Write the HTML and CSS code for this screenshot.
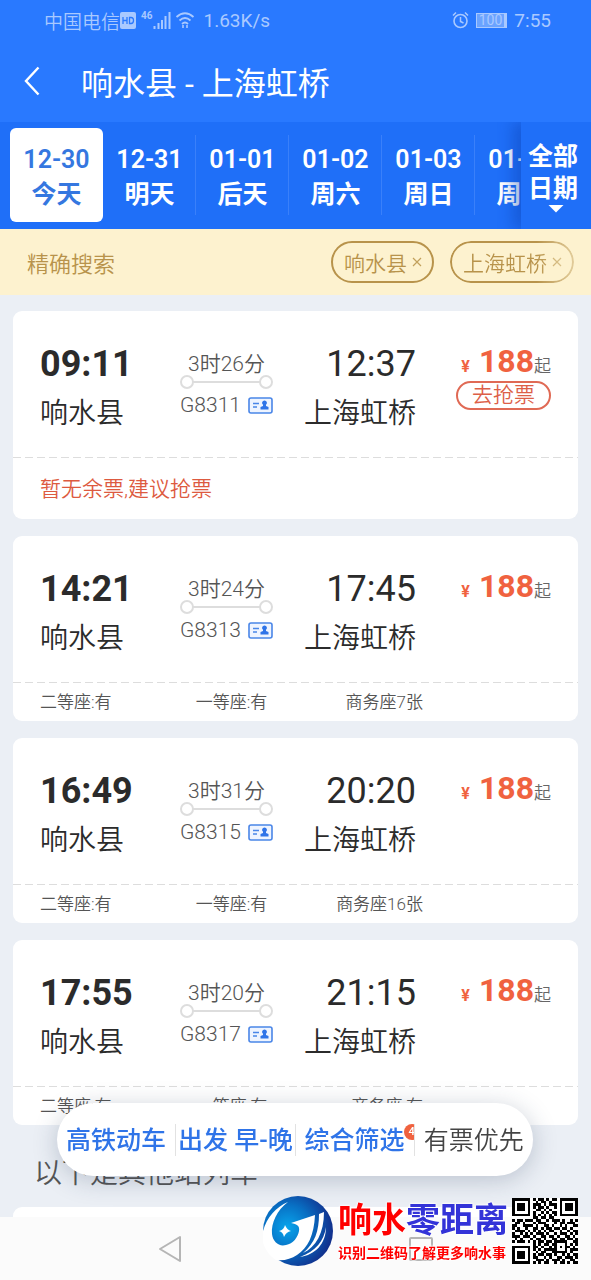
FILE: index.html
```html
<!DOCTYPE html>
<html lang="zh-CN">
<head>
    <meta charset="UTF-8">
    <meta name="viewport" content="width=device-width, initial-scale=1.0">
    <title>响水县 - 上海虹桥</title>
    <link rel="stylesheet" href="styles.css">
</head>
<body>

<svg width="0" height="0" class="defs">
    <symbol id="idCard" viewBox="0 0 25 17">
        <rect x="1" y="1" width="23" height="15" rx="2" fill="#eef4ff" stroke="#4a86e8" stroke-width="1.6"/>
        <path d="M5 6.500h6M5 10h4" stroke="#4a86e8" stroke-width="1.4"/>
        <path d="M16.500 3.500a2.400 2.400 0 0 1 1.500 4.300v1.200l2.500 1v2.500h-8v-2.500l2.500-1v-1.200a2.400 2.400 0 0 1 1.500-4.300z" fill="#2f74e8"/>
    </symbol>
</svg>

<div id="container">
    <header class="header">
        <div class="status">
            <span>中国电信</span>
            <svg class="hd" width="16" height="17" viewBox="0 0 16 17"><rect x="0" y="0" width="16" height="17" rx="2" fill="#a9c9ff"/><path d="M3 5v7M7 5v7M3 8.500h4M9.500 5.500v6h1.500q2.500 0 2.500-3t-2.500-3z" fill="none" stroke="#2979ff" stroke-width="1.300"/></svg>
            <span class="net">46</span>
            <svg class="signal" width="18" height="18" viewBox="0 0 18 18"><path d="M1.500 18v-3M5.500 18v-6M9 18v-9M12.500 18V5M16.500 18V1" stroke="#a9c9ff" stroke-width="2"/></svg>
            <svg class="wifi" width="20" height="18" viewBox="0 0 20 18"><path d="M1.500 6q8.500-7.500 17 0M4.500 9.500q5.500-5 11 0M7 13q3-3 6 0" fill="none" stroke="#a9c9ff" stroke-width="1.800"/><path d="M8 17v-3M12 14v3" stroke="#a9c9ff" stroke-width="1.600"/></svg>
            <span class="speed">1.63K/s</span>
            <span class="right">
                <svg width="17" height="18" viewBox="0 0 17 18"><circle cx="8.500" cy="10" r="6.500" fill="none" stroke="#a9c9ff" stroke-width="1.600"/><path d="M8.500 6v4.500l3 1.500M1 4.500l3-3M16 4.500l-3-3" fill="none" stroke="#a9c9ff" stroke-width="1.500"/></svg>
                <span class="battery">100</span>
                <span>7:55</span>
            </span>
        </div>
        <div class="title-bar">
            <button class="back" aria-label="返回"><svg width="16" height="30" viewBox="0 0 16 30"><path d="M14.500 1.500L2 15l12.500 13.500" fill="none" stroke="#fff" stroke-width="2.400"/></svg></button>
            <h1>响水县 - 上海虹桥</h1>
        </div>
    </header>

    <nav class="dates">
        <div class="date-list">
            <button class="date active">12-30<br>今天</button>
            <button class="date">12-31<br>明天</button>
            <button class="date">01-01<br>后天</button>
            <button class="date">01-02<br>周六</button>
            <button class="date">01-03<br>周日</button>
            <button class="date">01-04<br>周一</button>
        </div>
        <button class="all-dates">全部<br>日期<span class="caret"></span></button>
    </nav>

    <div class="search">
        <span>精确搜索</span>
        <div class="tags">
            <button class="tag">响水县<svg width="10" height="10" viewBox="0 0 10 10"><path d="M1 1l8 8M9 1L1 9" stroke="#c2a15c" stroke-width="1.200"/></svg></button>
            <button class="tag fade">上海虹桥<svg width="10" height="10" viewBox="0 0 10 10"><path d="M1 1l8 8M9 1L1 9" stroke="#c2a15c" stroke-width="1.200"/></svg></button>
        </div>
    </div>

    <main class="list">
        <article class="card">
            <div class="train">
                <div class="stop"><b class="time">09:11</b><span class="city">响水县</span></div>
                <div class="trip"><span>3时26分</span><i class="track"></i><span class="number">G8311<svg width="25" height="17"><use href="#idCard"/></svg></span></div>
                <div class="stop arrive"><span class="time">12:37</span><span class="city">上海虹桥</span></div>
                <div class="cost"><div class="price"><small>¥</small><b>188</b><span>起</span></div><button class="grab">去抢票</button></div>
            </div>
            <p class="notice">暂无余票,建议抢票</p>
        </article>

        <article class="card">
            <div class="train">
                <div class="stop"><b class="time">14:21</b><span class="city">响水县</span></div>
                <div class="trip"><span>3时24分</span><i class="track"></i><span class="number">G8313<svg width="25" height="17"><use href="#idCard"/></svg></span></div>
                <div class="stop arrive"><span class="time">17:45</span><span class="city">上海虹桥</span></div>
                <div class="cost"><div class="price"><small>¥</small><b>188</b><span>起</span></div></div>
            </div>
            <div class="seats"><span>二等座:有</span><span>一等座:有</span><span>商务座7张</span></div>
        </article>

        <article class="card">
            <div class="train">
                <div class="stop"><b class="time">16:49</b><span class="city">响水县</span></div>
                <div class="trip"><span>3时31分</span><i class="track"></i><span class="number">G8315<svg width="25" height="17"><use href="#idCard"/></svg></span></div>
                <div class="stop arrive"><span class="time">20:20</span><span class="city">上海虹桥</span></div>
                <div class="cost"><div class="price"><small>¥</small><b>188</b><span>起</span></div></div>
            </div>
            <div class="seats"><span>二等座:有</span><span>一等座:有</span><span>商务座16张</span></div>
        </article>

        <article class="card">
            <div class="train">
                <div class="stop"><b class="time">17:55</b><span class="city">响水县</span></div>
                <div class="trip"><span>3时20分</span><i class="track"></i><span class="number">G8317<svg width="25" height="17"><use href="#idCard"/></svg></span></div>
                <div class="stop arrive"><span class="time">21:15</span><span class="city">上海虹桥</span></div>
                <div class="cost"><div class="price"><small>¥</small><b>188</b><span>起</span></div></div>
            </div>
            <div class="seats"><span>二等座:有</span><span>一等座:有</span><span>商务座:有</span></div>
        </article>

        <h2 class="others">以下是其他站列车</h2>
        <article class="card next"></article>
    </main>

    <footer class="system">
        <svg class="sys-back" width="24" height="28" viewBox="0 0 24 28"><path d="M22 2v24L2 14z" fill="none" stroke="#b5b5b5" stroke-width="2" stroke-linejoin="round"/></svg>
        <svg class="sys-recent" width="24" height="24" viewBox="0 0 24 24"><rect x="1" y="1" width="22" height="22" rx="1" fill="none" stroke="#b5b5b5" stroke-width="2"/></svg>
    </footer>
</div>

<div class="filters">
    <button>高铁动车</button>
    <button>出发 早-晚</button>
    <button>综合筛选<span class="badge">4</span></button>
    <button class="plain">有票优先</button>
</div>

<div class="promo">
    <svg class="logo" width="72" height="72" viewBox="0 0 72 72">
        <defs>
            <radialGradient id="ball" cx="35%" cy="45%" r="65%">
                <stop offset="0" stop-color="#08a5ec"/>
                <stop offset=".5" stop-color="#0870c4"/>
                <stop offset="1" stop-color="#112f8c"/>
            </radialGradient>
        </defs>
        <circle cx="36" cy="36" r="35" fill="url(#ball)"/>
        <path d="M26 7C14 12 5 22 1 36v12c3 8 7 13 13 17 8 1 15-1 21-5 11-7 17-20 18-40l-24 8c6 1 9 3 8 8-1 6-6 13-13 14-7 2-13-3-14-11-1-11 5-24 16-32z" fill="#fff"/>
        <path d="M62 17l-5 2c0 17-4 29-16 39 13-6 21-20 21-41z" fill="#fff"/>
        <path d="M64 32c-2 14-10 24-26 30 15-2 26-13 26-30z" fill="#fff"/>
        <path d="M23 30q2 5 6 6-5 1-7 6-1-5-5-6 5-1 6-6z" fill="#fff"/>
    </svg>
    <div class="promo-text">
        <div class="promo-name">响水<span>零距离</span></div>
        <div class="promo-note">识别二维码了解更多响水事</div>
    </div>
    <svg id="qr" class="qr" width="66" height="66" viewBox="0 0 25 25" shape-rendering="crispEdges"></svg>
</div>

<script>
    const rows = [
        '1111111010110101101111111',
        '1000001001011010001000001',
        '1011101011101011101011101',
        '1011101010110100101011101',
        '1011101001101010001011101',
        '1000001010010101101000001',
        '1111111010101010101111111',
        '0000000011011011000000000',
        '1011011101100101110100101',
        '0110100010111000101101110',
        '1100111101001101001010011',
        '1010010011010110110110100',
        '0111101010101011001001011',
        '1001010101110100101110101',
        '1110111010011011010011010',
        '0101000101101001101101101',
        '1011101010110110111110011',
        '0000000010101101100010101',
        '1111111011010010101011010',
        '1000001010101111100010111',
        '1011101001011001111110100',
        '1011101010110110100101011',
        '1011101011001010011011101',
        '1000001001110101110100110',
        '1111111010101100101101011'
    ];

    let path = '';
    rows.forEach((row, y) => {
        for (let x = 0; x < row.length; x++) {
            if (row[x] === '1') path += `M${x} ${y}h1v1h-1z`;
        }
    });
    document.getElementById('qr').innerHTML = `<path d="${path}"/>`;
</script>

</body>
</html>
```
FILE: styles.css
```css
* {
    box-sizing: border-box;
}
body {
    margin: 0;
    font-family: Roboto, "Noto Sans CJK SC", sans-serif;
    color: #2b2b2b;
    background: #ebeff5;
}
button {
    padding: 0;
    border: 0;
    background: none;
    font-family: inherit;
    color: inherit;
    cursor: pointer;
}
.defs {
    position: absolute;
}
#container {
    display: flex;
    flex-direction: column;
    height: 100vh;
}

/* header */
.header {
    background: #2979ff;
    color: #fff;
}
.status {
    display: flex;
    align-items: center;
    height: 40px;
    padding: 0 40px 0 44px;
    font-size: 19px;
    font-weight: 350;
    color: #a9c9ff;
}
.hd {
    margin-right: 5px;
}
.net {
    align-self: flex-start;
    padding-top: 10px;
    font-size: 10px;
    font-weight: 700;
}
.signal {
    margin-right: 4px;
}
.wifi {
    margin-right: 9px;
}
.speed,
.right {
    font-weight: 400;
}
.right {
    display: flex;
    align-items: center;
    gap: 7px;
    margin-left: auto;
}
.battery {
    padding: 0 2px;
    border: 1px solid #a9c9ff;
    border-right-width: 3px;
    background: #6ba3ff;
    font-size: 14px;
    line-height: 13px;
}
.title-bar {
    display: flex;
    align-items: center;
    height: 82px;
    padding-left: 24px;
}
.back {
    display: flex;
    width: 57px;
}
h1 {
    margin: 0;
    font-size: 32px;
    font-weight: 400;
}

/* date strip */
.dates {
    display: flex;
    height: 107px;
    background: #1f6ff8;
    color: #fff;
}
.date-list {
    display: flex;
    flex: 1;
    min-width: 0;
    padding: 6px 0 7px 10px;
    overflow: hidden;
}
.date {
    flex: 0 0 93px;
    padding-top: 4px;
    font-size: 25px;
    line-height: 35px;
    font-weight: 600;
    background: linear-gradient(#3a80fa, #3a80fa) right center / 1px 80px no-repeat;
}
.date.active {
    border-radius: 6px;
    background: #fff;
    color: #3577e0;
}
.all-dates {
    flex: 0 0 70px;
    padding: 2px 6px 0 0;
    font-size: 25px;
    line-height: 32px;
    font-weight: 600;
    box-shadow: -8px 0 14px rgba(10, 60, 170, .4);
    clip-path: inset(0 0 0 -24px);
}
.caret {
    display: block;
    width: 16px;
    height: 8px;
    margin-left: 27px;
    background: #fff;
    clip-path: polygon(0 0, 100% 0, 50% 100%);
}

/* exact search */
.search {
    display: flex;
    align-items: center;
    justify-content: space-between;
    height: 66px;
    padding: 0 17px 0 27px;
    background: #fdf2cf;
    color: #b8934b;
    font-size: 22px;
    font-weight: 350;
}
.tags {
    display: flex;
    gap: 16px;
}
.tag {
    display: flex;
    align-items: center;
    gap: 5px;
    height: 42px;
    padding: 0 10px 0 11px;
    border: 2px solid #b8934b;
    border-radius: 21px;
    font-size: 21px;
    font-weight: 350;
}
.tag.fade {
    -webkit-mask-image: linear-gradient(to right, #000 70%, rgba(0, 0, 0, .4));
    mask-image: linear-gradient(to right, #000 70%, rgba(0, 0, 0, .4));
}

/* train list */
.list {
    flex: 1;
    min-height: 0;
    padding: 16px 13px 0;
    overflow-y: auto;
    scrollbar-width: none;
}
.card {
    margin-bottom: 17px;
    border-radius: 9px;
    background: #fff;
}
.train {
    display: grid;
    grid-template-columns: 140px 93px 1fr 135px;
    padding: 32px 27px 23px;
    background: repeating-linear-gradient(to right, #ddd 0 8px, #fff 8px 12px) bottom / 100% 1px no-repeat;
}
.stop {
    display: flex;
    flex-direction: column;
    gap: 8px;
    line-height: 42px;
}
.arrive {
    text-align: right;
}
.time {
    font-size: 36px;
}
.city {
    font-size: 28px;
    font-weight: 350;
}
.trip {
    display: flex;
    flex-direction: column;
    align-items: center;
    padding-top: 9px;
    font-size: 21px;
    line-height: 24px;
    font-weight: 350;
    color: #555;
}
.track {
    display: flex;
    align-items: center;
    justify-content: space-between;
    width: 100%;
    height: 10px;
    margin: 1px 0 6px;
    background: linear-gradient(#ddd, #ddd) center / 74px 2px no-repeat;
}
.track::before,
.track::after {
    content: "";
    width: 10px;
    height: 10px;
    border: 2px solid #ddd;
    border-radius: 50%;
    background: #fff;
}
.number {
    display: flex;
    align-items: center;
    justify-content: space-between;
    width: 100%;
}
.cost {
    display: flex;
    flex-direction: column;
    align-items: flex-end;
}
.price {
    display: flex;
    align-items: baseline;
    height: 38px;
    line-height: 36px;
    color: #f0623f;
}
.price small {
    margin-right: 9px;
    font-size: 16px;
    font-weight: 700;
}
.price b {
    font-size: 32px;
}
.price span {
    font-size: 17px;
    line-height: 20px;
    font-weight: 350;
    color: #666;
}
.grab {
    width: 95px;
    height: 29px;
    border: 2px solid #e06a55;
    border-radius: 15px;
    font-size: 21px;
    line-height: 25px;
    font-weight: 350;
    color: #dd5f48;
}
.notice {
    margin: 0;
    padding: 2px 27px 0;
    font-size: 21px;
    line-height: 59px;
    font-weight: 350;
    color: #dd5a40;
}
.seats {
    display: grid;
    grid-template-columns: 1fr 1fr 1fr;
    padding: 0 155px 0 27px;
    font-size: 17px;
    line-height: 38px;
    font-weight: 350;
    color: #555;
}
.seats span:nth-child(2) {
    text-align: center;
}
.seats span:nth-child(3) {
    text-align: right;
}
.others {
    margin: 28px 21px 12px;
    font-size: 28px;
    line-height: 42px;
    font-weight: 350;
    color: #555;
}
.next {
    height: 186px;
}

/* system buttons */
.system {
    display: flex;
    align-items: center;
    justify-content: space-between;
    height: 63px;
    padding: 0 158px;
    background: #fbfbfb;
}

/* floating filters */
.filters {
    position: fixed;
    left: 57px;
    right: 58px;
    bottom: 104px;
    display: flex;
    align-items: center;
    height: 73px;
    border-radius: 37px;
    background: #fff;
    box-shadow: 0 4px 24px rgba(40, 60, 90, .25);
}
.filters button {
    position: relative;
    flex: 1 1 0;
    height: 32px;
    border-left: 1px solid #e2e2e2;
    font-size: 25px;
    line-height: 34px;
    font-weight: 500;
    color: #2f74e8;
    white-space: nowrap;
    overflow: hidden;
}
.filters button:first-child {
    border-left: 0;
}
.filters .plain {
    font-weight: 350;
    color: #444;
}
.badge {
    position: absolute;
    top: 0;
    right: -6px;
    width: 16px;
    height: 16px;
    border-radius: 50%;
    background: #f0623f;
    font-size: 11px;
    line-height: 16px;
    color: #fff;
}

/* promo strip */
.promo {
    position: fixed;
    right: 13px;
    bottom: 13px;
    display: flex;
    align-items: center;
}
.promo-text {
    margin: 0 4px;
    font-family: "Noto Sans CJK SC", sans-serif;
    font-weight: 700;
    color: #f00;
    text-shadow: 0 0 2px #fff, 0 0 2px #fff, 0 0 3px #fff;
}
.promo-name {
    font-size: 34px;
    line-height: 42px;
}
.promo-name span {
    color: #3333d8;
}
.promo-note {
    font-size: 14px;
    line-height: 26px;
}
.qr {
    background: #fff;
}
```
